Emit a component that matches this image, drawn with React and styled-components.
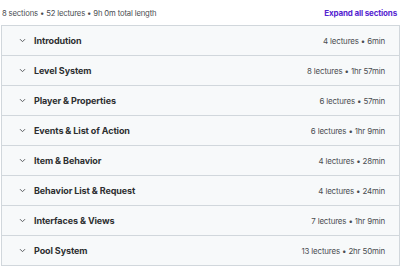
import React from "react";
import styled, { createGlobalStyle } from "styled-components";

const Global = createGlobalStyle`
  html, body { margin: 0; padding: 0; background: #ffffff; }
  body { font-family: Inter, "Noto Sans", sans-serif; color: #2d2f31; }
`;

const Wrap = styled.div`
  width: 400px;
  padding: 0 0 0 1px;
  box-sizing: border-box;
`;

const Header = styled.div`
  display: flex;
  align-items: center;
  justify-content: space-between;
  height: 25px;
  padding: 1px 3px 0 1px;
  box-sizing: border-box;
`;

const Stats = styled.span`
  font-size: 7.7px;
  color: #4a4d51;
  letter-spacing: -0.15px;
`;

const Expand = styled.button`
  border: 0;
  background: none;
  padding: 0;
  font-family: inherit;
  font-size: 8px;
  font-weight: 700;
  color: #5624d0;
  cursor: pointer;
  letter-spacing: -0.15px;
`;

const Panel = styled.div`
  border: 1px solid #d1d7dc;
  border-bottom: 0;
`;

const Row = styled.div`
  display: flex;
  align-items: center;
  height: 29px;
  padding: 0 14px 0 17px;
  background: #f7f9fa;
  border-bottom: 1px solid #d1d7dc;
`;

const Chevron = styled.svg`
  width: 7px;
  height: 5px;
  margin-right: 8px;
  flex: none;
`;

const Title = styled.span`
  flex: 1;
  font-size: 9px;
  font-weight: 700;
  color: #2d2f31;
  letter-spacing: -0.1px;
`;

const Meta = styled.span`
  font-size: 7.9px;
  color: #4a4d51;
  letter-spacing: -0.15px;
`;

const sections = [
  ["Introdution", "4 lectures • 6min"],
  ["Level System", "8 lectures • 1hr 57min"],
  ["Player & Properties", "6 lectures • 57min"],
  ["Events & List of Action", "6 lectures • 1hr 9min"],
  ["Item & Behavior", "4 lectures • 28min"],
  ["Behavior List & Request", "4 lectures • 24min"],
  ["Interfaces & Views", "7 lectures • 1hr 9min"],
  ["Pool System", "13 lectures • 2hr 50min"],
];

export default function App() {
  return (
    <>
      <Global />
      <Wrap>
        <Header>
          <Stats>8 sections • 52 lectures • 9h 0m total length</Stats>
          <Expand>Expand all sections</Expand>
        </Header>
        <Panel>
          {sections.map(([t, m]) => (
            <Row key={t}>
              <Chevron viewBox="0 0 7 5">
                <path d="M1 1.2 L3.5 3.7 L6 1.2" fill="none" stroke="#5a5d61" strokeWidth="1" />
              </Chevron>
              <Title>{t}</Title>
              <Meta>{m}</Meta>
            </Row>
          ))}
        </Panel>
      </Wrap>
    </>
  );
}
